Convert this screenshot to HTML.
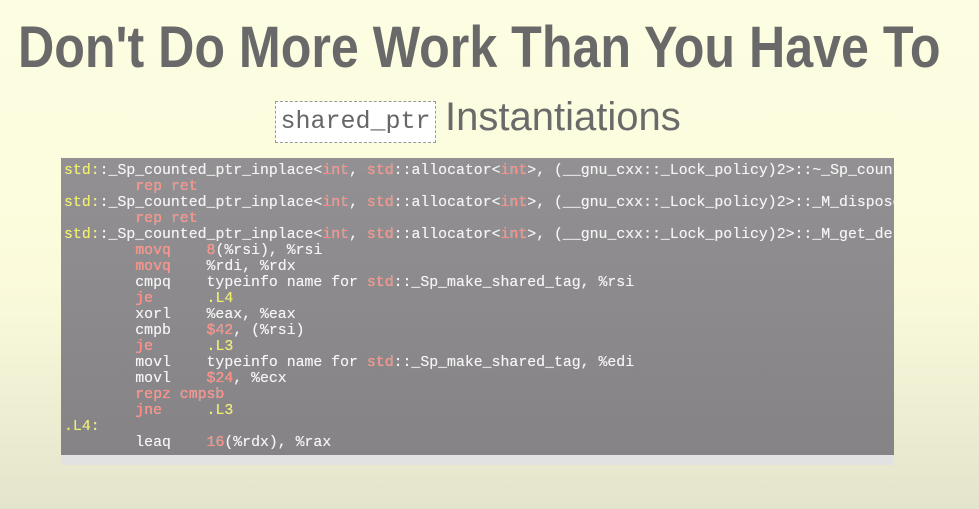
<!DOCTYPE html>
<html><head><meta charset="utf-8"><style>
html,body{margin:0;padding:0}
body{width:979px;height:509px;overflow:hidden;position:relative;background:linear-gradient(#fdfde2 0%,#fbfbdc 55%,#e4e4cc 100%);font-family:"Liberation Sans",sans-serif}
h1{position:absolute;left:18px;top:19px;margin:0;font-size:58px;line-height:1;font-weight:bold;color:#696969;white-space:nowrap;transform:scaleX(0.865);transform-origin:0 0}
.box{position:absolute;left:275px;top:101px;width:159px;height:40px;border:1px dashed #999;background:#fff;font-family:"Liberation Mono",monospace;font-size:25px;color:#666;line-height:40px;text-align:center}
.sub{position:absolute;left:445px;top:97px;font-size:40px;line-height:1;color:#6a6a6a;white-space:nowrap}
.code{position:absolute;left:61px;top:158px;width:833px;height:297px;background:linear-gradient(#929092,#858385);overflow:hidden}
.sb{position:absolute;left:61px;top:455px;width:833px;height:10px;background:#e2e2e2}
pre{margin:0;padding:5px 0 0 3px;font-family:"Liberation Mono",monospace;font-size:14.85px;line-height:16px;color:#f4f4f4;font-weight:normal;text-shadow:0 0 0.4px #fff;white-space:pre}
.y{color:#eeee66}.r{color:#ff8a80}
</style></head><body>
<h1>Don't Do More Work Than You Have To</h1>
<div class="box">shared_ptr</div>
<div class="sub">Instantiations</div>
<div class="code"><pre><span class="y">std:</span>:_Sp_counted_ptr_inplace&lt;<span class="r">int</span>, <span class="r">std</span>::allocator&lt;<span class="r">int</span>&gt;, (__gnu_cxx::_Lock_policy)2&gt;::~_Sp_counted_ptr_inplace()
        <span class="r">rep ret</span>
<span class="y">std:</span>:_Sp_counted_ptr_inplace&lt;<span class="r">int</span>, <span class="r">std</span>::allocator&lt;<span class="r">int</span>&gt;, (__gnu_cxx::_Lock_policy)2&gt;::_M_dispose()
        <span class="r">rep ret</span>
<span class="y">std:</span>:_Sp_counted_ptr_inplace&lt;<span class="r">int</span>, <span class="r">std</span>::allocator&lt;<span class="r">int</span>&gt;, (__gnu_cxx::_Lock_policy)2&gt;::_M_get_deleter()
        <span class="r">movq</span>    <span class="r">8</span>(%rsi), %rsi
        <span class="r">movq</span>    %rdi, %rdx
        cmpq    typeinfo name for <span class="r">std</span>::_Sp_make_shared_tag, %rsi
        <span class="r">je</span>      <span class="y">.L4</span>
        xorl    %eax, %eax
        cmpb    <span class="r">$42</span>, (%rsi)
        <span class="r">je</span>      <span class="y">.L3</span>
        movl    typeinfo name for <span class="r">std</span>::_Sp_make_shared_tag, %edi
        movl    <span class="r">$24</span>, %ecx
        <span class="r">repz cmpsb</span>
        <span class="r">jne</span>     <span class="y">.L3</span>
<span class="y">.L4:</span>
        leaq    <span class="r">16</span>(%rdx), %rax
</pre></div>
<div class="sb"></div>
</body></html>
